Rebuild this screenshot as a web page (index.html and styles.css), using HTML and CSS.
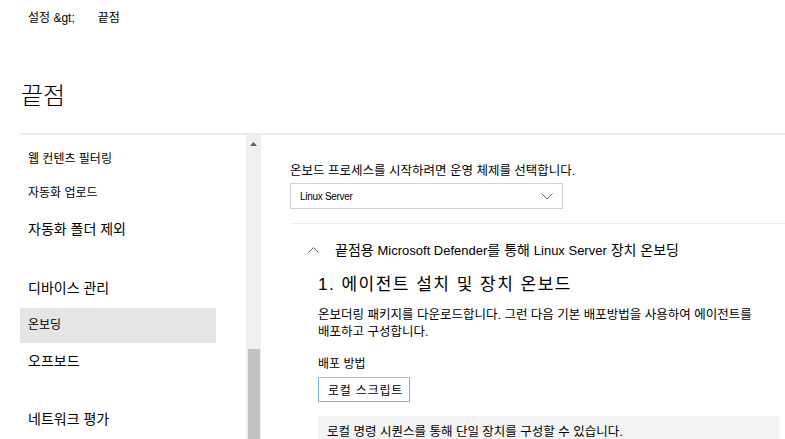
FILE: index.html
```html
<!DOCTYPE html>
<html lang="ko">
<head>
<meta charset="utf-8">
<link rel="stylesheet" href="styles.css">
</head>
<body>
<div class="crumb"><span>설정 &amp;gt;</span><span class="crumb-cur">끝점</span></div>
<h1 class="title">끝점</h1>
<div class="main">
  <div class="side">
    <nav class="nav">
      <div class="item sm i1">웹 컨텐츠 필터링</div>
      <div class="item sm i2">자동화 업로드</div>
      <div class="item i3">자동화 폴더 제외</div>
      <div class="item i4">디바이스 관리</div>
      <div class="item sm active">온보딩</div>
      <div class="item i6">오프보드</div>
      <div class="item i7">네트워크 평가</div>
    </nav>
    <div class="scroll">
      <svg class="arrow" width="7" height="4" viewBox="0 0 7 4"><path d="M0 4 L3.5 0 L7 4 Z" fill="#606060"/></svg>
      <div class="thumb"></div>
    </div>
  </div>
  <div class="content">
    <p class="lead">온보드 프로세스를 시작하려면 운영 체제를 선택합니다.</p>
    <div class="select">
      <span>Linux Server</span>
      <svg width="12" height="7" viewBox="0 0 12 7"><path d="M0.5 0.5 L6 6 L11.5 0.5" fill="none" stroke="#666" stroke-width="1"/></svg>
    </div>
    <div class="section-head">
      <svg class="up" width="11" height="6" viewBox="0 0 11 6"><path d="M0.5 5.5 L5.5 0.5 L10.5 5.5" fill="none" stroke="#666" stroke-width="1"/></svg>
      <span>끝점용 <span class="lat">Microsoft Defender</span>를 통해 <span class="lat">Linux Server</span> 장치 온보딩</span>
    </div>
    <div class="step">
      <h2 class="step-title">1. 에이전트 설치 및 장치 온보드</h2>
      <p class="desc">온보더링 패키지를 다운로드합니다. 그런 다음 기본 배포방법을 사용하여 에이전트를<br>배포하고 구성합니다.</p>
      <div class="label">배포 방법</div>
      <div class="btn">로컬 스크립트</div>
      <div class="note">로컬 명령 시퀀스를 통해 단일 장치를 구성할 수 있습니다.</div>
    </div>
  </div>
</div>
</body>
</html>
```
FILE: styles.css
```css
* { box-sizing: border-box; }
html, body { margin: 0; padding: 0; overflow: hidden; }
body {
  width: 785px;
  height: 439px;
  background: #fff;
  color: #000;
  font-family: "Liberation Sans", "Noto Sans CJK KR", sans-serif;
  font-size: 12px;
}
.crumb {
  padding: 10px 0 0 28px;
  height: 28px;
  font-size: 12px;
  line-height: 16px;
}
.crumb-cur { margin-left: 23px; }
.title {
  margin: 0;
  padding: 48px 0 0 21px;
  font-size: 24px;
  font-weight: 300;
  line-height: 40px;
  height: 105px;
}
.main {
  display: flex;
  margin-left: 20px;
  border-top: 2px solid #ececec;
  height: 307px;
}
.side {
  display: flex;
  width: 241px;
  flex: none;
}
.nav {
  width: 226px;
  padding-top: 14px;
}
.item {
  width: 196px;
  padding-left: 8px;
  font-size: 14px;
  line-height: 20px;
}
.item.sm { font-size: 12px; }
.i1 { height: 34px; }
.i2 { height: 36px; }
.i3 { height: 59px; }
.i4 { height: 30px; }
.active {
  background: #e5e5e5;
  height: 35px;
  line-height: 35px;
  margin-bottom: 8px;
}
.i6 { height: 58px; }
.scroll {
  width: 15px;
  background: #f0f0f0;
  display: flex;
  flex-direction: column;
  align-items: center;
  padding-top: 7px;
}
.arrow { flex: none; }
.thumb {
  margin-top: 203px;
  width: 12px;
  flex: 1;
  background: #c2c2c2;
}
.content {
  flex: 1;
  padding: 24px 0 0 29px;
}
.lead {
  margin: 0;
  font-size: 12.5px;
  line-height: 24px;
}
.select {
  width: 273px;
  height: 26px;
  border: 1px solid #d2d2d2;
  display: flex;
  align-items: center;
  justify-content: space-between;
  padding: 0 9px 0 9px;
  font-size: 10px;
  letter-spacing: -0.3px;
}
.section-head {
  margin-top: 14px;
  border-top: 1px solid #eeeeee;
  display: flex;
  align-items: center;
  height: 48px;
  padding-top: 2px;
  font-size: 14px;
}
.section-head .lat { font-size: 13px; }
.up { margin: 2px 16px 0 18px; }
.step { padding-left: 28px; }
.step-title {
  margin: 0;
  font-size: 17px;
  font-weight: 400;
  letter-spacing: 1.5px;
  line-height: 24px;
  padding-top: 2px;
}
.desc {
  margin: 10px 0 0;
  font-size: 12.5px;
  line-height: 17px;
}
.label {
  margin-top: 15px;
  font-size: 12px;
  line-height: 16px;
}
.btn {
  margin-top: 5px;
  width: 92px;
  height: 25px;
  border: 1px solid #7aaee0;
  border-top-color: #9cc3ea;
  display: flex;
  align-items: center;
  padding-left: 9px;
  font-size: 12px;
  letter-spacing: 0.8px;
}
.note {
  margin-top: 14px;
  width: 461px;
  height: 30px;
  background: #f4f4f4;
  padding: 7px 0 0 9px;
  font-size: 12.5px;
  line-height: 18px;
}
```
